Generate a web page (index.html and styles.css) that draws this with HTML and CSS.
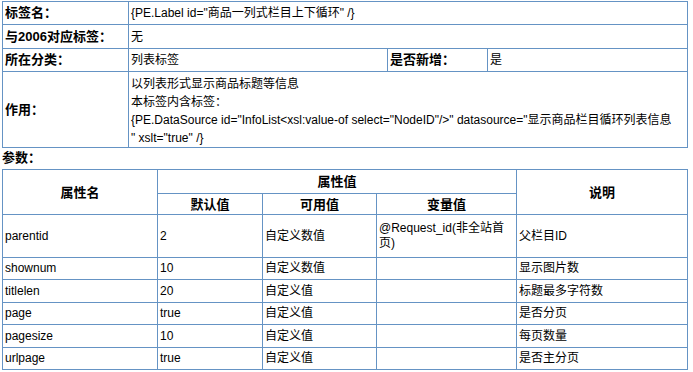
FILE: index.html
```html
<!DOCTYPE html>
<html lang="zh">
<head>
<meta charset="utf-8">
<link rel="stylesheet" href="styles.css">
</head>
<body>
<table class="info">
  <colgroup>
    <col class="c-label"><col class="c-a"><col class="c-b"><col class="c-c">
  </colgroup>
  <tr class="r">
    <th>标签名：</th>
    <td colspan="3">{PE.Label id="商品一列式栏目上下循环" /}</td>
  </tr>
  <tr class="r r-tall">
    <th>与2006对应标签：</th>
    <td colspan="3">无</td>
  </tr>
  <tr class="r">
    <th>所在分类：</th>
    <td>列表标签</td>
    <th>是否新增：</th>
    <td>是</td>
  </tr>
  <tr class="r-use">
    <th>作用：</th>
    <td colspan="3">以列表形式显示商品标题等信息<br>本标签内含标签：<br>{PE.DataSource id="InfoList&lt;xsl:value-of select="NodeID"/&gt;" datasource="显示商品栏目循环列表信息<br>" xslt="true" /}</td>
  </tr>
</table>
<div class="params-title">参数：</div>
<table class="params">
  <colgroup>
    <col class="p1"><col class="p2"><col class="p3"><col class="p4"><col class="p5">
  </colgroup>
  <tr class="h1">
    <th rowspan="2">属性名</th>
    <th colspan="3">属性值</th>
    <th rowspan="2">说明</th>
  </tr>
  <tr class="h2">
    <th>默认值</th>
    <th>可用值</th>
    <th>变量值</th>
  </tr>
  <tr class="tall">
    <td>parentid</td><td>2</td><td>自定义数值</td><td>@Request_id(非全站首<br>页)</td><td>父栏目ID</td>
  </tr>
  <tr class="row-a">
    <td>shownum</td><td>10</td><td>自定义数值</td><td></td><td>显示图片数</td>
  </tr>
  <tr class="row-b">
    <td>titlelen</td><td>20</td><td>自定义值</td><td></td><td>标题最多字符数</td>
  </tr>
  <tr class="row-a">
    <td>page</td><td>true</td><td>自定义值</td><td></td><td>是否分页</td>
  </tr>
  <tr class="row-b">
    <td>pagesize</td><td>10</td><td>自定义值</td><td></td><td>每页数量</td>
  </tr>
  <tr class="row-a">
    <td>urlpage</td><td>true</td><td>自定义值</td><td></td><td>是否主分页</td>
  </tr>
</table>
</body>
</html>
```

FILE: styles.css
```css
html, body {
  margin: 0;
  padding: 0;
  background: #fff;
}
body {
  padding: 1px 0 0 2px;
  font-family: "Liberation Sans", "Noto Sans CJK SC", sans-serif;
  font-size: 12px;
  color: #000;
}
table {
  border-collapse: collapse;
  table-layout: fixed;
  width: 685px;
}
td, th {
  border: 1px solid #6593c4;
  padding: 0 2px;
  text-align: left;
  vertical-align: middle;
  font-weight: normal;
  line-height: 18px;
}
.info th {
  font-weight: bold;
  font-size: 13px;
}
.c-label { width: 126px; }
.c-a { width: 259px; }
.c-b { width: 100px; }
.c-c { width: 200px; }
.info .r { height: 23px; }
.info .r-tall { height: 24px; }
.info .r-use { height: 76px; }
.info .r-use td { padding-top: 2px; }

.params-title {
  font-weight: bold;
  font-size: 13px;
  line-height: 18px;
  height: 20px;
  padding-top: 1px;
}

.params td, .params th { line-height: 15px; }
.params th {
  text-align: center;
  font-weight: bold;
  font-size: 13px;
}
.p1 { width: 155px; }
.p2 { width: 105px; }
.p3 { width: 114px; }
.p4 { width: 140px; }
.p5 { width: 171px; }
.params .h1 { height: 24px; }
.params .h2 { height: 21px; }
.params .tall { height: 43px; }
.params .row-a { height: 22px; }
.params .row-b { height: 23px; }
```
